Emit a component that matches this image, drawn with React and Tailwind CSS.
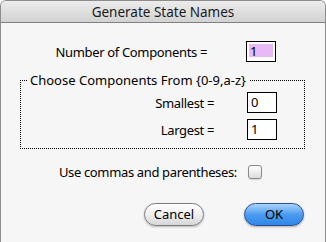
import React from 'react';

const font = { fontFamily: '"Noto Sans", "DejaVu Sans", sans-serif' };

const Field = ({ value, selected }) => (
    <div className="w-[30px] h-[21px] border border-black bg-white p-[2px] pb-[4px]">
        <div className={`h-full pl-[1px] text-[13px] leading-[15px] text-black ${selected ? 'bg-[#e9b9f6]' : ''}`}>{value}</div>
    </div>
);

const App = () => {
    return (
        <div className="w-[326px] h-[242px] overflow-hidden bg-white text-[13px] leading-[16px] text-black" style={font}>
            <div className="h-full rounded-t-[6px] border-x border-t border-[#8d8d8d] bg-[#f6f6f6] flex flex-col">
                <div className="h-[22px] shrink-0 rounded-t-[5px] border-b border-[#808080] bg-gradient-to-b from-[#ececec] to-[#d2d2d2] flex items-center justify-center text-[13.5px] text-[#1a1a1a]">
                    Generate State Names
                </div>

                <div className="flex items-center pt-[18px]">
                    <div className="w-[206px] text-right tracking-[-0.35px]">Number of Components =</div>
                    <div className="ml-[39px]"><Field value="1" selected /></div>
                </div>

                <fieldset className="mt-[11px] mx-[19px] w-[285px] h-[76px] border border-dotted border-black pt-[4px]">
                    <legend className="ml-[6px] px-[3px] leading-[15px]">Choose Components From {'{0-9,a-z}'}</legend>
                    <div className="flex items-center">
                        <div className="w-[193px] text-right tracking-[-0.35px]">Smallest =</div>
                        <div className="ml-[33px]"><Field value="0" /></div>
                    </div>
                    <div className="flex items-center mt-[6px]">
                        <div className="w-[193px] text-right tracking-[-0.35px]">Largest =</div>
                        <div className="ml-[33px]"><Field value="1" /></div>
                    </div>
                </fieldset>

                <div className="flex items-center mt-[15px]">
                    <div className="w-[236px] text-right tracking-[-0.35px]">Use commas and parentheses:</div>
                    <div className="ml-[11px] w-[14px] h-[14px] rounded-[3px] border border-[#8a8a8a] bg-gradient-to-b from-[#ffffff] via-[#eeeeee] to-[#dcdcdc] shadow-[0_1px_1px_rgba(0,0,0,0.15)]" />
                </div>

                <div className="flex items-center mt-[23px]">
                    <button className="ml-[143px] w-[60px] h-[23px] rounded-full border border-[#7b7b7b] bg-gradient-to-b from-[#ffffff] via-[#f0f0f0] to-[#d6d6d6] shadow-[0_1px_2px_rgba(0,0,0,0.25)] text-[13px] text-black leading-none">
                        Cancel
                    </button>
                    <button className="ml-[40px] w-[60px] h-[23px] rounded-full border border-[#2a4f9a] bg-gradient-to-b from-[#a9d3fb] via-[#4a9cf0] to-[#2f86e6] shadow-[0_1px_2px_rgba(0,0,0,0.3)] text-[13px] text-black leading-none">
                        OK
                    </button>
                </div>
            </div>
        </div>
    );
};

export default App;
